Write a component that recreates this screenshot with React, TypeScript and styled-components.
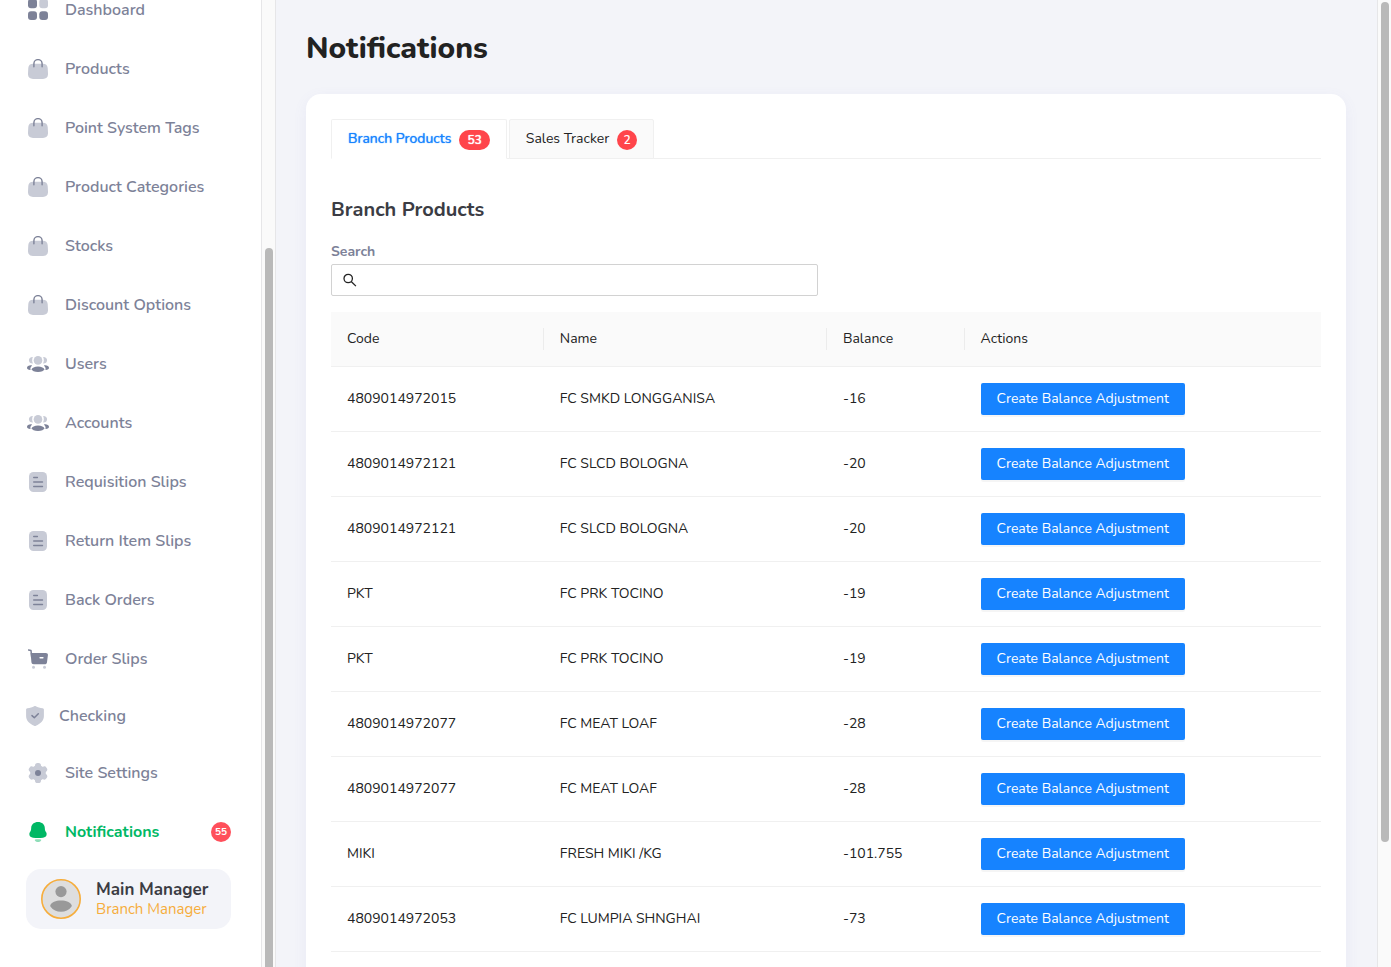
import React from 'react';
import styled, { createGlobalStyle } from 'styled-components';

const DARK = '#7d8298';
const LIGHT = '#c8cbd6';

const GlobalStyle = createGlobalStyle`
  *, *::before, *::after { box-sizing: border-box; }
  body {
    margin: 0;
    font-family: Nunito, 'Open Sans', 'Noto Sans', sans-serif;
    font-size: 14px;
    line-height: 22px;
    color: #222;
    background: #f3f4f9;
    -webkit-font-smoothing: antialiased;
  }
  h1, h2, p { margin: 0; }
  button, input { font: inherit; }
`;

const Page = styled.div`
  display: flex;
  height: 100vh;
  overflow: hidden;
`;

const Sidebar = styled.aside`
  flex: 0 0 261px;
  padding: 0 30px 38px 26px;
  background: #fff;
  overflow: hidden;
`;

const NavList = styled.nav`
  display: flex;
  flex-direction: column;
  gap: 39px;
`;

const NavLink = styled.a<{ $active?: boolean; $compact?: boolean }>`
  display: flex;
  align-items: center;
  gap: 15px;
  height: ${p => (p.$compact ? 16 : 20)}px;
  font-size: 16px;
  font-weight: ${p => (p.$active ? 700 : 600)};
  white-space: nowrap;
  text-decoration: none;
  color: ${p => (p.$active ? '#00b865' : DARK)};
`;

const IconBox = styled.span<{ $compact?: boolean }>`
  display: flex;
  justify-content: center;
  flex: 0 0 ${p => (p.$compact ? 18 : 24)}px;
  svg { display: block; flex: none; }
`;

const NavCount = styled.span`
  display: flex;
  align-items: center;
  justify-content: center;
  width: 20px;
  height: 20px;
  margin-left: auto;
  border-radius: 50%;
  background: #ff4f5b;
  color: #fff;
  font-size: 10px;
  font-weight: 700;
`;

const UserCard = styled.section`
  display: flex;
  align-items: center;
  gap: 15px;
  height: 60px;
  margin-top: 27px;
  padding: 0 15px;
  border-radius: 15px;
  background: #f3f4f9;
  white-space: nowrap;
  svg { flex: none; }
`;

const UserName = styled.p`
  font-size: 17px;
  font-weight: 700;
  line-height: 20px;
  color: #3b3c44;
`;

const UserRole = styled.p`
  font-size: 15px;
  line-height: 18px;
  color: #f6ad3c;
`;

const ScrollTrack = styled.div`
  flex: 0 0 15px;
  padding: 2px 2px 0 3px;
  border: solid #e6e6e8;
  border-width: 0 1px;
  background: #fafafa;
`;

const PageTrack = styled(ScrollTrack)`
  flex-basis: 14px;
  border-right: 0;
`;

const Thumb = styled.div<{ $start: string; $size: string }>`
  width: 8px;
  height: ${p => p.$size};
  margin-top: ${p => p.$start};
  border-radius: 4px;
  background: #b9b9b9;
`;

const Main = styled.main`
  flex: 1;
  min-width: 0;
  padding: 28px 31px 0 30px;
  overflow: hidden;
`;

const PageTitle = styled.h1`
  font-size: 30px;
  font-weight: 800;
  line-height: 42px;
`;

const Card = styled.section`
  margin-top: 24px;
  padding: 25px 25px 90px;
  border-radius: 15px;
  background: #fff;
  box-shadow: 0 4px 14px rgba(110, 120, 200, 0.08);
`;

const TabBar = styled.div`
  display: flex;
  gap: 2px;
  border-bottom: 1px solid #f0f0f0;
`;

const Tab = styled.button<{ $active?: boolean }>`
  display: flex;
  align-items: center;
  gap: 8px;
  height: 40px;
  margin-bottom: -1px;
  padding: 0 16px;
  border: 1px solid #f0f0f0;
  border-bottom-color: ${p => (p.$active ? '#fff' : '#f0f0f0')};
  border-radius: 2px 2px 0 0;
  background: ${p => (p.$active ? '#fff' : '#fafafa')};
  color: ${p => (p.$active ? '#1683ff' : '#222')};
  font-size: 14px;
  text-shadow: ${p => (p.$active ? '0 0 1px currentColor' : 'none')};
  white-space: nowrap;
`;

const TabCount = styled.span`
  min-width: 20px;
  height: 20px;
  margin-top: 2px;
  padding: 0 8px;
  border-radius: 10px;
  background: #ff454b;
  color: #fff;
  font-size: 12px;
  font-weight: 600;
  line-height: 20px;
  &[data-single='true'] { padding: 0 6px; }
`;

const SectionTitle = styled.h2`
  margin-top: 36px;
  font-size: 20px;
  font-weight: 700;
  line-height: 30px;
  color: #3b3c44;
`;

const FieldGrid = styled.div`
  display: grid;
  grid-template-columns: 1fr 1fr;
  gap: 16px;
  margin: 16px 0;
`;

const FieldLabel = styled.label`
  display: block;
  margin-bottom: 1px;
  font-size: 14px;
  font-weight: 700;
  color: ${DARK};
`;

const SearchBox = styled.div`
  display: flex;
  align-items: center;
  gap: 4px;
  height: 32px;
  padding: 0 11px 0 9px;
  border: 1px solid #d2d2d2;
  border-radius: 2px;
  background: #fff;
  svg { flex: none; }
`;

const SearchInput = styled.input`
  flex: 1;
  min-width: 0;
  padding: 0;
  border: 0;
  outline: 0;
  background: transparent;
`;

const Table = styled.table`
  width: 100%;
  table-layout: fixed;
  border-collapse: separate;
  border-spacing: 0;
`;

const HeadCell = styled.th<{ $width?: string }>`
  width: ${p => p.$width ?? 'auto'};
  height: 55px;
  padding: 0;
  border-bottom: 1px solid #f0f0f0;
  background: #fafafa;
  font-weight: 400;
  text-align: left;
`;

const HeadLabel = styled.div<{ $last?: boolean }>`
  padding: 0 16px;
  border-right: ${p => (p.$last ? 0 : 1)}px solid #ececec;
`;

const Cell = styled.td`
  height: 65px;
  padding: 0 16px;
  border-bottom: 1px solid #f0f0f0;
  white-space: nowrap;
`;

const ActionButton = styled.button`
  display: block;
  height: 32px;
  padding: 0 16px;
  border: 0;
  border-radius: 2px;
  background: #1683ff;
  box-shadow: 0 2px 0 rgba(0, 0, 0, 0.04);
  color: #fff;
`;

const DashboardIcon = () => (
  <svg width="20" height="20" viewBox="0 0 20 20" fill={DARK}>
    <rect y="-1" width="9" height="9.3" rx="3" />
    <rect x="11.3" y="-1" width="8.7" height="9.3" rx="3" fill={LIGHT} />
    <rect y="11.3" width="9" height="8.7" rx="3" />
    <rect x="11.3" y="11.3" width="8.7" height="8.7" rx="3" />
  </svg>
);

const BagIcon = () => (
  <svg width="20" height="20" viewBox="0 0 20 20" fill="none">
    <path d="M5.2 4.800h9.600c3 0 4.700 1.500 4.900 4.300l.3 5.500c.2 3.500-1.600 5.400-5 5.400H5c-3.400 0-5.200-1.900-5-5.400l.3-5.500c.2-2.800 1.900-4.300 4.900-4.300Z" fill={LIGHT} />
    <path d="M5.900 7.700V4.700a4.100 4.100 0 0 1 8.200 0v3" stroke={DARK} strokeWidth="1.400" strokeLinecap="round" />
  </svg>
);

const UsersIcon = () => (
  <svg width="22" height="16" viewBox="0 0 22 16" fill={DARK}>
    <circle cx="11" cy="4.400" r="4.300" fill={LIGHT} />
    <path d="M5.900 1C3.400.9 1.900 2.300 1.900 4.300S3.500 7.700 6 7.600C4.900 5.700 4.900 2.900 5.900 1ZM16.100 1c2.500-.1 4 1.300 4 3.300s-1.600 3.400-4.100 3.300c1.100-1.900 1.100-4.700.1-6.600Z" fill={LIGHT} />
    <ellipse cx="11" cy="13.300" rx="6.200" ry="2.700" />
    <path d="M4.600 9.300C1.900 9.100 0 10.200 0 11.800 0 13.200 1.500 14.200 3.600 14c-.6-1.500 0-3.100 1.200-4.100.3-.3.200-.6-.2-.6ZM17.400 9.300c2.700-.2 4.600.9 4.600 2.500 0 1.400-1.500 2.400-3.600 2.200.6-1.500 0-3.100-1.200-4.100-.3-.3-.2-.6.200-.6Z" />
  </svg>
);

const SlipIcon = () => (
  <svg width="18" height="20" viewBox="0 0 18 20" fill="none">
    <rect width="18" height="20" rx="4.500" fill={LIGHT} />
    <path d="M4.700 5.500h3.700M4.700 10h8.800M4.700 14.500h8.800" stroke={DARK} strokeWidth="1.400" strokeLinecap="round" />
  </svg>
);

const CartIcon = () => (
  <svg width="20" height="20" viewBox="0 0 20 20" fill="none">
    <path d="M.6 1.100 3 1.500l.7 7" stroke={DARK} strokeWidth="1.500" strokeLinecap="round" strokeLinejoin="round" />
    <path d="M2.600 4h15.200c1.500 0 2.300.9 2.100 2.300l-.9 6.900c-.2 1.400-1 2.100-2.400 2.100H5.800c-1.500 0-2.300-.8-2.400-2.200L2.600 4Z" fill={DARK} />
    <path d="M12.100 8.700h2.800" stroke="#fff" strokeWidth="1.500" strokeLinecap="round" />
    <circle cx="5.500" cy="18.300" r="1.500" fill={LIGHT} />
    <circle cx="16.500" cy="18.300" r="1.500" fill={LIGHT} />
  </svg>
);

const ShieldIcon = () => (
  <svg width="18" height="20" viewBox="0 0 18 20" fill="none">
    <path d="M8.200.3c.5-.3 1.100-.3 1.600 0 1.900 1 4.200 1.600 6.800 2 .8.100 1.300.6 1.300 1.400v6.600c0 4.500-3.600 7.400-8 9.500-.6.300-1.200.3-1.800 0-4.400-2.100-8-5-8-9.500V3.700c0-.8.500-1.300 1.300-1.400 2.600-.4 4.900-1 6.800-2Z" fill={LIGHT} />
    <path d="m6 9.600 2.300 2.200 4-4" stroke={DARK} strokeWidth="1.500" strokeLinecap="round" strokeLinejoin="round" />
  </svg>
);

const GearIcon = () => (
  <svg width="20" height="20" viewBox="0 0 20 20">
    <g fill={LIGHT}>
      <circle cx="10" cy="10" r="7.800" />
      {[0, 60, 120].map(angle => (
        <rect key={angle} x="7" y="0" width="6" height="20" rx="2.600" transform={`rotate(${angle} 10 10)`} />
      ))}
    </g>
    <circle cx="10" cy="10" r="3" fill={DARK} />
  </svg>
);

const BellIcon = () => (
  <svg width="18" height="20" viewBox="0 0 18 20">
    <path d="M9 0c3.900 0 6.600 2.400 6.800 5.800.1 2.200.3 3 1.200 4.300.6.900.8 1.700.6 2.700-.3 1.700-1.500 2.700-3.600 2.900-3.300.3-6.700.3-10 0C1.900 15.500.7 14.500.4 12.800c-.2-1 0-1.800.6-2.700.9-1.300 1.100-2.100 1.200-4.300C2.400 2.400 5.100 0 9 0Z" fill="#00b865" />
    <path d="M6.100 17.500c1.900-.3 3.900-.3 5.800 0 .4.100.5.500.2.900-.8 1-1.900 1.600-3.100 1.600s-2.300-.6-3.100-1.600c-.3-.4-.2-.8.200-.9Z" fill="#8eddb8" />
  </svg>
);

const Avatar = () => (
  <svg width="40" height="40" viewBox="0 0 40 40">
    <circle cx="20" cy="20" r="19.200" fill="#dedede" stroke="#f6ad3c" strokeWidth="1.600" />
    <circle cx="20" cy="12.600" r="5.600" fill="#999" />
    <path d="M9.300 26.300C10.400 23.400 14.700 21.500 20 21.500s9.600 1.900 10.700 4.800c.2.600.1 1-.3 1.500-2.400 3.200-6.100 5-10.400 5s-8-1.800-10.400-5c-.4-.5-.5-.9-.3-1.500Z" fill="#999" />
  </svg>
);

const SearchIcon = () => (
  <svg width="18" height="18" viewBox="0 0 18 18" fill="none" stroke="#222" strokeWidth="1.300" aria-hidden="true">
    <circle cx="7.200" cy="7.500" r="4.200" />
    <path d="m10.200 10.500 4.700 4.600" />
  </svg>
);

type NavItem = {
  label: string;
  Icon: React.FC;
  compact?: boolean;
  active?: boolean;
  count?: number;
};

const navItems: NavItem[] = [
  { label: 'Dashboard', Icon: DashboardIcon },
  { label: 'Products', Icon: BagIcon },
  { label: 'Point System Tags', Icon: BagIcon },
  { label: 'Product Categories', Icon: BagIcon },
  { label: 'Stocks', Icon: BagIcon },
  { label: 'Discount Options', Icon: BagIcon },
  { label: 'Users', Icon: UsersIcon },
  { label: 'Accounts', Icon: UsersIcon },
  { label: 'Requisition Slips', Icon: SlipIcon },
  { label: 'Return Item Slips', Icon: SlipIcon },
  { label: 'Back Orders', Icon: SlipIcon },
  { label: 'Order Slips', Icon: CartIcon },
  { label: 'Checking', Icon: ShieldIcon, compact: true },
  { label: 'Site Settings', Icon: GearIcon },
  { label: 'Notifications', Icon: BellIcon, active: true, count: 55 },
];

const products = [
  ['4809014972015', 'FC SMKD LONGGANISA', '-16'],
  ['4809014972121', 'FC SLCD BOLOGNA', '-20'],
  ['4809014972121', 'FC SLCD BOLOGNA', '-20'],
  ['PKT', 'FC PRK TOCINO', '-19'],
  ['PKT', 'FC PRK TOCINO', '-19'],
  ['4809014972077', 'FC MEAT LOAF', '-28'],
  ['4809014972077', 'FC MEAT LOAF', '-28'],
  ['MIKI', 'FRESH MIKI /KG', '-101.755'],
  ['4809014972053', 'FC LUMPIA SHNGHAI', '-73'],
];

export default function App() {
  return (
    <>
      <GlobalStyle />
      <Page>
        <Sidebar>
          <NavList>
            {navItems.map(({ label, Icon, compact, active, count }) => (
              <NavLink key={label} href="#" $compact={compact} $active={active}>
                <IconBox $compact={compact}><Icon /></IconBox>
                <span>{label}</span>
                {count && <NavCount>{count}</NavCount>}
              </NavLink>
            ))}
          </NavList>
          <UserCard>
            <Avatar />
            <div>
              <UserName>Main Manager</UserName>
              <UserRole>Branch Manager</UserRole>
            </div>
          </UserCard>
        </Sidebar>
        <ScrollTrack><Thumb $start="246px" $size="100%" /></ScrollTrack>
        <Main>
          <PageTitle>Notifications</PageTitle>
          <Card>
            <TabBar role="tablist">
              <Tab role="tab" aria-selected="true" $active>
                Branch Products <TabCount>53</TabCount>
              </Tab>
              <Tab role="tab" aria-selected="false">
                Sales Tracker <TabCount data-single="true">2</TabCount>
              </Tab>
            </TabBar>
            <SectionTitle>Branch Products</SectionTitle>
            <FieldGrid>
              <div>
                <FieldLabel htmlFor="product-search">Search</FieldLabel>
                <SearchBox>
                  <SearchIcon />
                  <SearchInput id="product-search" type="text" />
                </SearchBox>
              </div>
            </FieldGrid>
            <Table>
              <thead>
                <tr>
                  <HeadCell $width="21.5%"><HeadLabel>Code</HeadLabel></HeadCell>
                  <HeadCell $width="28.6%"><HeadLabel>Name</HeadLabel></HeadCell>
                  <HeadCell $width="13.9%"><HeadLabel>Balance</HeadLabel></HeadCell>
                  <HeadCell><HeadLabel $last>Actions</HeadLabel></HeadCell>
                </tr>
              </thead>
              <tbody>
                {products.map(([code, name, balance], index) => (
                  <tr key={index}>
                    <Cell>{code}</Cell>
                    <Cell>{name}</Cell>
                    <Cell>{balance}</Cell>
                    <Cell><ActionButton>Create Balance Adjustment</ActionButton></Cell>
                  </tr>
                ))}
              </tbody>
            </Table>
          </Card>
        </Main>
        <PageTrack><Thumb $start="0px" $size="87%" /></PageTrack>
      </Page>
    </>
  );
}
